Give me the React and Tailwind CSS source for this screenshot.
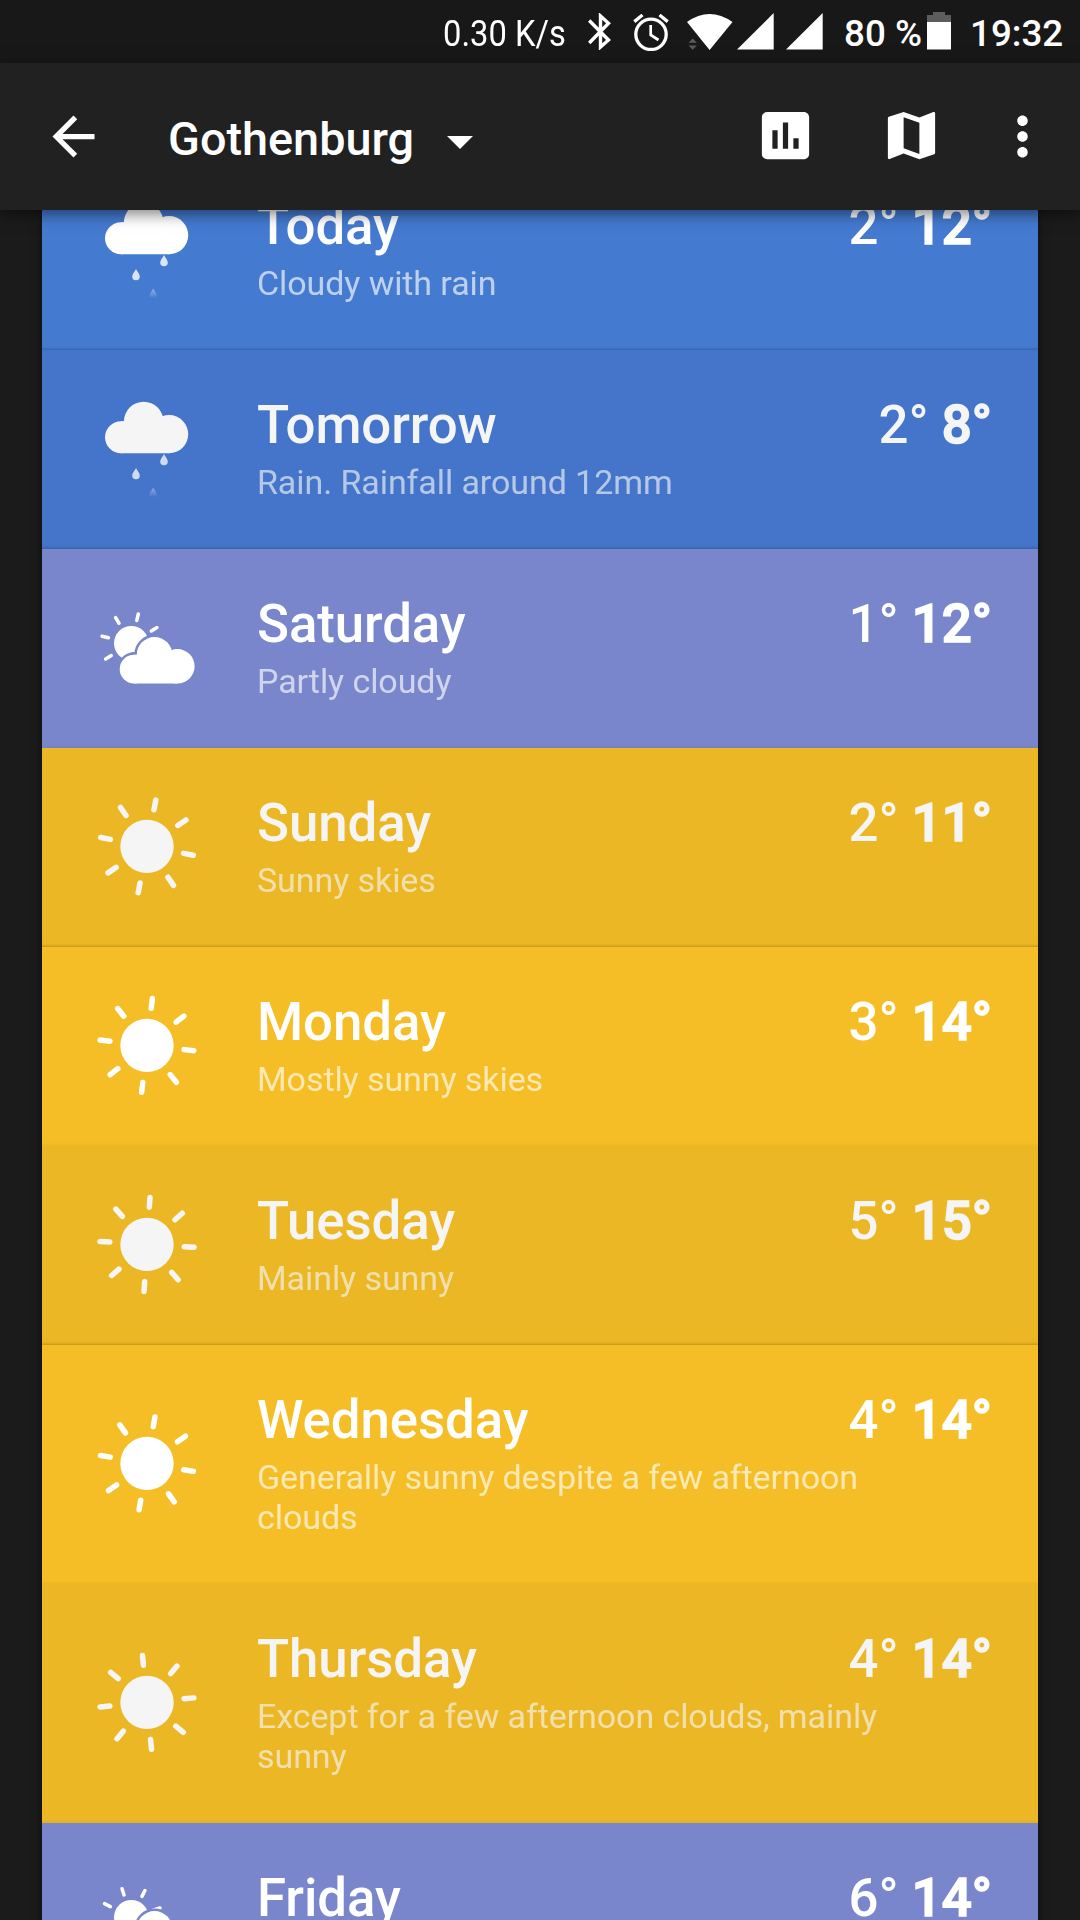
import { useId } from 'react'

const days = [
  { name: 'Today', text: 'Cloudy with rain', low: 2, high: 12, icon: 'rain', bg: 'bg-[#447ad0]' },
  { name: 'Tomorrow', text: 'Rain. Rainfall around 12mm', low: 2, high: 8, icon: 'rain', bg: 'bg-[#4475ca]', dim: true },
  { name: 'Saturday', text: 'Partly cloudy', low: 1, high: 12, icon: 'partly', angle: 13.5, bg: 'bg-[#7986cb]', soft: true },
  { name: 'Sunday', text: 'Sunny skies', low: 2, high: 11, icon: 'sun', angle: 10.8, bg: 'bg-[#ebb725]', dim: true },
  { name: 'Monday', text: 'Mostly sunny skies', low: 3, high: 14, icon: 'sun', angle: 6.5, bg: 'bg-[#f5be26]', soft: true },
  { name: 'Tuesday', text: 'Mainly sunny', low: 5, high: 15, icon: 'sun', angle: 3.6, bg: 'bg-[#ebb725]', dim: true },
  { name: 'Wednesday', text: 'Generally sunny despite a few afternoon clouds', low: 4, high: 14, icon: 'sun', angle: 9.7, bg: 'bg-[#f5be26]', tall: true, soft: true },
  { name: 'Thursday', text: 'Except for a few afternoon clouds, mainly sunny', low: 4, high: 14, icon: 'sun', angle: -5.5, bg: 'bg-[#ebb725]', dim: true, tall: true, soft: true },
  { name: 'Friday', text: 'Partly cloudy', low: 6, high: 14, icon: 'partly', angle: 27, bg: 'bg-[#7986cb]' },
]

const rays = [0, 45, 90, 135, 180, 225, 270, 315]

function Cloud(props) {
  return (
    <g {...props}>
      <circle cx="29" cy="44.3" r="16" />
      <circle cx="51.7" cy="28.5" r="19.8" />
      <circle cx="77.1" cy="41.2" r="19.1" />
      <path d="M29 28.3H52L71 28V41H77.1V60.3H29z" />
    </g>
  )
}

function Drop({ x, y, ...props }) {
  return (
    <path
      transform={`translate(${x} ${y})`}
      d="M0 0C1.2 2.8 3.8 5 3.8 7.5A3.8 3.8 0 0 1 -3.8 7.5C-3.8 5 -1.2 2.8 0 0z"
      {...props}
    />
  )
}

function RainIcon() {
  const id = useId()
  return (
    <svg viewBox="0 0 110 111" className="w-[110px] h-[111px]" fill="currentColor">
      <linearGradient id={id} x1="0" y1="0" x2="0" y2="1">
        <stop offset="0" stopColor="currentColor" stopOpacity="0.45" />
        <stop offset="0.85" stopColor="currentColor" stopOpacity="0" />
      </linearGradient>
      <Cloud />
      <Drop x={72} y={61} opacity="0.8" />
      <Drop x={44} y={75} opacity="0.8" />
      <Drop x={61.2} y={94.5} fill={`url(#${id})`} />
    </svg>
  )
}

function SunIcon({ angle }) {
  return (
    <svg viewBox="0 0 110 111" className="w-[110px] h-[111px]" fill="currentColor" stroke="currentColor">
      <circle cx="55" cy="55.4" r="26.7" stroke="none" />
      <g strokeWidth="5.5" strokeLinecap="round">
        {rays.map((r) => (
          <line key={r} x1="55" y1="18.1" x2="55" y2="8.3" transform={`rotate(${r + angle} 55 55.4)`} />
        ))}
      </g>
    </svg>
  )
}

function PartlyIcon({ angle }) {
  const id = useId()
  return (
    <svg viewBox="0 0 110 111" className="w-[110px] h-[111px]" fill="currentColor">
      {/* keeps a thin gap between the sun and the cloud */}
      <mask id={id} maskUnits="userSpaceOnUse" x="0" y="0" width="110" height="111">
        <rect width="110" height="111" fill="#fff" />
        <Cloud transform="translate(16 37.2) scale(.9)" fill="#000" stroke="#000" strokeWidth="5.4" />
      </mask>
      <g mask={`url(#${id})`}>
        <circle cx="39.3" cy="51.3" r="17.3" />
        <g stroke="currentColor" strokeWidth="3.5" strokeLinecap="round">
          {rays.map((r) => (
            <line key={r} x1="39.3" y1="27.8" x2="39.3" y2="21.2" transform={`rotate(${r + angle} 39.3 51.3)`} />
          ))}
        </g>
      </g>
      <Cloud transform="translate(16 37.2) scale(.9)" />
    </svg>
  )
}

function WeatherIcon({ icon, angle }) {
  if (icon === 'rain') return <RainIcon />
  if (icon === 'sun') return <SunIcon angle={angle} />
  return <PartlyIcon angle={angle} />
}

function DayRow({ day }) {
  const edge = day.soft
    ? 'shadow-[inset_0_-3px_3px_-2px_rgba(0,0,0,0.06)]'
    : 'shadow-[inset_0_-3px_3px_-2px_rgba(0,0,0,0.2)]'
  return (
    <div className={`flex shrink-0 ${edge} ${day.tall ? 'h-[239px]' : 'h-[199px]'} ${day.bg} ${day.dim ? 'text-[#f5f5f5]' : 'text-white'}`}>
      <div className={`w-[110px] ml-[50px] ${day.tall ? 'pt-[63px]' : 'pt-[43px]'}`}>
        <WeatherIcon icon={day.icon} angle={day.angle} />
      </div>
      <div className="flex-1 ml-[55px] mr-[46px] pt-[45px]">
        <div className="flex justify-between text-[52.8px] leading-[60px] font-medium whitespace-nowrap">
          <h2 className="tracking-[-0.08px]">{day.name}</h2>
          <p>{day.low}° <b className="font-medium [-webkit-text-stroke:1.7px_currentColor]">{day.high}°</b></p>
        </div>
        <p className="w-[640px] mt-[7px] text-[34px] leading-[40px] tracking-[-0.08px] opacity-65">{day.text}</p>
      </div>
    </div>
  )
}

function StatusBar() {
  return (
    <div className="h-[63px] shrink-0 bg-[#181818] flex text-[36.75px] leading-[67px] font-medium whitespace-nowrap">
      <span className="w-[122px] ml-[443px] font-normal">
        <span className="inline-block origin-left scale-x-[.89]">0.30 K/s</span>
      </span>
      <svg viewBox="0 0 24 37" className="w-[24px] h-[37px] ml-[23px] mt-[13px]" fill="none" stroke="currentColor" strokeWidth="3.4">
        <path d="M1.2 7.5L20.5 27L12.5 34V3L20.5 10.3L1.2 30" />
      </svg>
      <svg viewBox="0 0 37 37" className="w-[37px] h-[37px] ml-[21px] mt-[14px]" fill="none" stroke="currentColor" strokeWidth="3.3">
        <circle cx="18" cy="20.3" r="15.2" />
        <path d="M1.3 7.6L9.5 1M34.7 7.6L26.5 1" />
        <path d="M17.7 11V21L25.5 26" strokeWidth="2.7" />
      </svg>
      <svg viewBox="0 0 46 37" className="w-[46px] h-[37px] ml-[17px] mt-[14px]" fill="currentColor">
        <path d="M0 8Q22.5 -8 45.5 8L22.6 36z" />
        <path d="M1.5 28.8L5.7 24.4L9.9 28.8zM1.5 31.4H9.9L5.7 35.8z" fill="#5b5b5b" />
      </svg>
      <svg viewBox="0 0 37 37" className="w-[37px] h-[37px] ml-[4px] mt-[13px]" fill="currentColor">
        <path d="M0 36.5L36.7 0V36.5z" />
      </svg>
      <svg viewBox="0 0 37 37" className="w-[37px] h-[37px] ml-[12px] mt-[13px]" fill="currentColor">
        <path d="M0 36.5L36.7 0V36.5z" />
      </svg>
      <span className="w-[83px] ml-[21px]">80 %</span>
      <svg viewBox="0 0 24 38" className="w-[24px] h-[38px] mt-[12px]">
        <path d="M6 0H18V3H24V10H0V3H6z" fill="#5d5d5d" />
        <path d="M0 10H24V37.5H0z" fill="#fff" />
      </svg>
      <span className="ml-[19px]">19:32</span>
    </div>
  )
}

function AppBar() {
  return (
    <header className="relative z-10 h-[147px] shrink-0 bg-[#212121] flex items-center pl-[42px] pr-[26px] shadow-[0_4px_14px_rgba(0,0,0,0.5)]">
      <svg viewBox="0 0 24 24" className="size-[63px]" fill="currentColor">
        <path d="M20 11H7.83l5.59-5.59L12 4l-8 8 8 8 1.41-1.41L7.83 13H20v-2z" />
      </svg>
      <h1 className="ml-[63px] mt-[5px] w-[279px] text-[46.8px] leading-[60px] font-medium">Gothenburg</h1>
      <svg viewBox="0 0 26 13" className="w-[26px] h-[13px] mt-[12px]" fill="currentColor">
        <path d="M0 0H26L13 13z" />
      </svg>
      <svg viewBox="0 0 24 24" className="size-[63px] mb-[2px] ml-auto" fill="currentColor">
        <path d="M19 3H5c-1.1 0-2 .9-2 2v14c0 1.1.9 2 2 2h14c1.1 0 2-.9 2-2V5c0-1.1-.9-2-2-2zM9 17H7v-7h2v7zm4 0h-2V7h2v10zm4 0h-2v-4h2v4z" />
      </svg>
      <svg viewBox="0 0 24 24" className="size-[63px] mb-[2px] ml-[63px]" fill="currentColor">
        <path d="M20.5 3l-.16.03L15 5.1 9 3 3.36 4.9c-.21.07-.36.25-.36.48V20.5c0 .28.22.5.5.5l.16-.03L9 18.9l6 2.1 5.64-1.9c.21-.07.36-.25.36-.48V3.5c0-.28-.22-.5-.5-.5zM15 19l-6-2.11V5l6 2.11V19z" />
      </svg>
      <svg viewBox="0 0 24 24" className="size-[63px] ml-[48px]" fill="currentColor">
        <path d="M12 8c1.1 0 2-.9 2-2s-.9-2-2-2-2 .9-2 2 .9 2 2 2zm0 2c-1.1 0-2 .9-2 2s.9 2 2 2 2-.9 2-2-.9-2-2-2zm0 6c-1.1 0-2 .9-2 2s.9 2 2 2 2-.9 2-2-.9-2-2-2z" />
      </svg>
    </header>
  )
}

export default function App() {
  return (
    <div className="w-[1080px] h-[1920px] flex flex-col overflow-hidden bg-[#1b1b1b] text-white font-[Roboto,sans-serif]">
      <StatusBar />
      <AppBar />
      <main className="flex-1 min-h-0 overflow-hidden px-[42px]">
        {/* the list is scrolled a little, so its first row starts under the app bar */}
        <div className="-mt-[59px] flex flex-col shadow-[0_0_8px_rgba(0,0,0,0.5)]">
          {days.map((day) => (
            <DayRow key={day.name} day={day} />
          ))}
        </div>
      </main>
    </div>
  )
}
